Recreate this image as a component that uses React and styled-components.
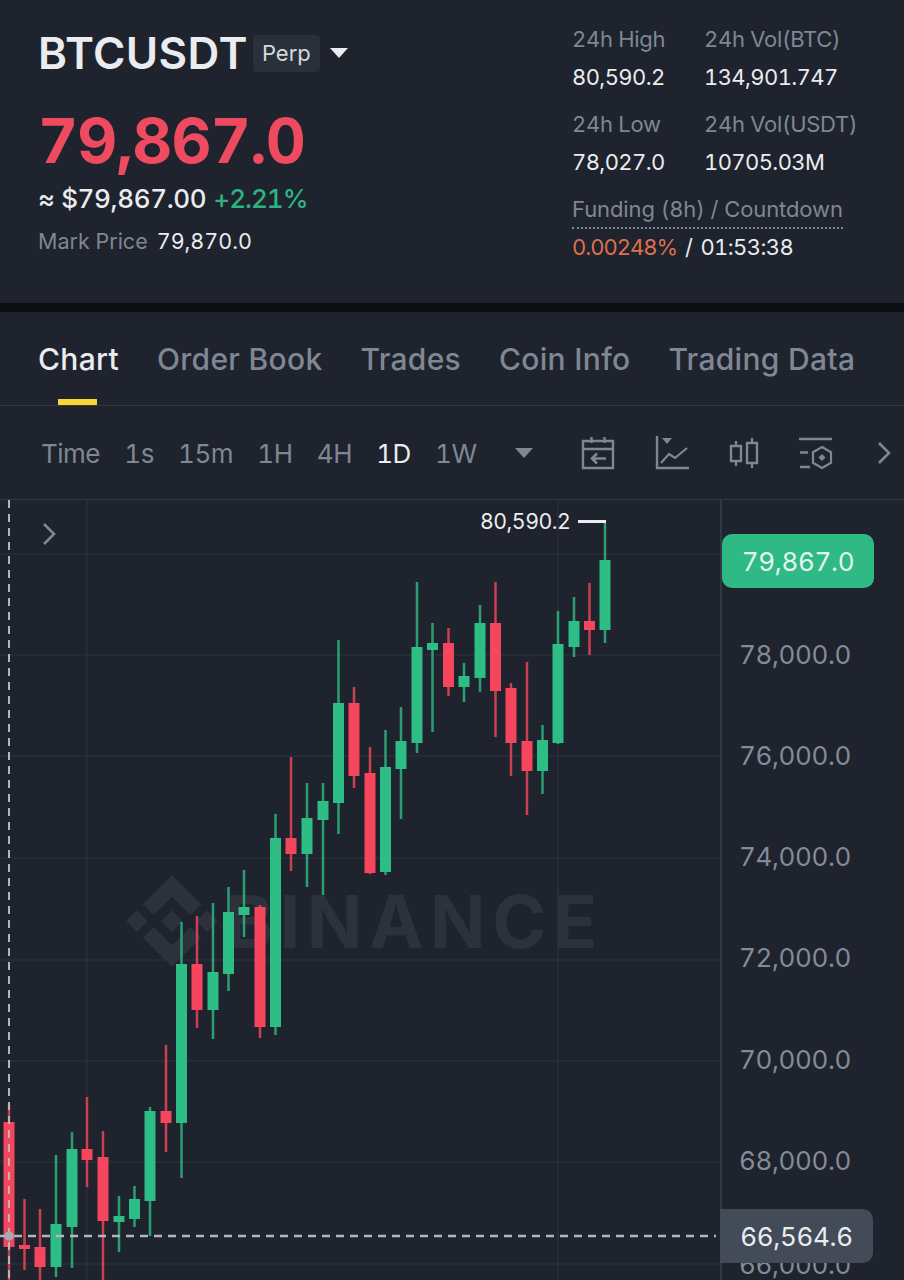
import styled, { createGlobalStyle } from 'styled-components';

const GlobalStyle = createGlobalStyle`
  html, body {
    margin: 0;
    padding: 0;
    background: #1e232d;
  }
  * {
    box-sizing: border-box;
  }
  body {
    font-family: Inter, 'Liberation Sans', sans-serif;
    font-variant-numeric: tabular-nums;
  }
`;

const GREEN = '#2ebd85';
const RED = '#f6465d';
const MUTED = '#7f8793';

// [x, top of body, bottom of body, wick top, wick bottom, colour]  y values are page px
const candles = [
  [9, 1122, 1247, 1105, 1280, 'r'],
  [24.5, 1245, 1249, 1199, 1270, 'r'],
  [40, 1247, 1267, 1209, 1280, 'r'],
  [56, 1224, 1267, 1155, 1277, 'g'],
  [72, 1149, 1227, 1132, 1268, 'g'],
  [87, 1149, 1160, 1097, 1187, 'r'],
  [103, 1157, 1221, 1131, 1280, 'r'],
  [119, 1216, 1222, 1196, 1252, 'g'],
  [134.5, 1199, 1219, 1186, 1227, 'g'],
  [150, 1111, 1201, 1107, 1236, 'g'],
  [166, 1111, 1123, 1045, 1152, 'r'],
  [181.5, 964, 1123, 922, 1178, 'g'],
  [197, 964, 1010, 916, 1028, 'r'],
  [213, 972, 1010, 903, 1039, 'g'],
  [228.5, 912, 974, 887, 991, 'g'],
  [244, 907, 915, 870, 937, 'g'],
  [260, 907, 1027, 905, 1038, 'r'],
  [275.5, 838, 1027, 814, 1035, 'g'],
  [291, 838, 854, 757, 871, 'r'],
  [307, 818, 854, 783, 887, 'g'],
  [323, 801, 820, 783, 895, 'g'],
  [338.5, 703, 803, 640, 834, 'g'],
  [354, 703, 776, 687, 788, 'r'],
  [370, 773, 873, 747, 874, 'r'],
  [385.5, 767, 872, 730, 875, 'g'],
  [401, 741, 769, 707, 819, 'g'],
  [417, 647, 743, 582, 753, 'g'],
  [432.5, 643, 650, 623, 732, 'g'],
  [448.5, 643, 687, 628, 696, 'r'],
  [464, 676, 687, 663, 702, 'g'],
  [480, 623, 678, 605, 692, 'g'],
  [495.5, 623, 691, 582, 737, 'r'],
  [511, 688, 743, 683, 776, 'r'],
  [527, 741, 771, 662, 815, 'r'],
  [542.5, 740, 771, 725, 794, 'g'],
  [558, 644, 743, 611, 744, 'g'],
  [574, 621, 647, 597, 657, 'g'],
  [589.5, 621, 630, 583, 655, 'r'],
  [605, 560, 630, 523, 643, 'g'],
];

const gridY = [554, 655, 756, 858, 960, 1061, 1162, 1264];
const gridX = [87, 558];
const axisLabels = [
  ['78,000.0', 155],
  ['76,000.0', 256],
  ['74,000.0', 357],
  ['72,000.0', 458],
  ['70,000.0', 560],
  ['68,000.0', 661],
  ['66,000.0', 765],
];

const Page = styled.div`
  width: 904px;
  height: 1280px;
  overflow: hidden;
  background: #1e232d;
  color: #eaecef;
`;

const Header = styled.header`
  height: 303px;
  padding: 24px 47px 0 38px;
  display: flex;
  justify-content: space-between;
`;

const Summary = styled.div`
  display: flex;
  flex-direction: column;
`;

const SymbolRow = styled.div`
  display: flex;
  align-items: center;
  height: 58px;
`;

const Symbol = styled.h1`
  margin: 0;
  font-size: 44px;
  font-weight: 600;
  letter-spacing: 0.4px;
  color: #eaecef;
`;

const Badge = styled.span`
  margin-left: 5px;
  width: 67px;
  height: 37px;
  border-radius: 4px;
  background: #2a303a;
  display: flex;
  align-items: center;
  justify-content: center;
  font-size: 22px;
  color: #d5d9df;
`;

const Caret = styled.span`
  width: 0;
  height: 0;
  margin-left: ${(p) => p.$gap}px;
  border-left: 9px solid transparent;
  border-right: 9px solid transparent;
  border-top: 10px solid ${(p) => p.$color};
`;

const LastPrice = styled.div`
  margin-top: 24px;
  font-size: 62px;
  line-height: 70px;
  font-weight: 700;
  letter-spacing: -0.85px;
  color: #ee4b60;
`;

const FiatRow = styled.div`
  margin-top: 6px;
  display: flex;
  gap: 7px;
  font-size: 26px;
  line-height: 34px;
  font-weight: 500;
  letter-spacing: -0.35px;
`;

const Change = styled.span`
  color: #2eb380;
  letter-spacing: -1px;
`;

const MarkRow = styled.div`
  margin-top: 10px;
  display: flex;
  gap: 9px;
  font-size: 21.5px;
  line-height: 30px;
`;

const Muted = styled.span`
  color: ${MUTED};
`;

const StatsColumn = styled.div`
  width: 285px;
  display: flex;
  flex-direction: column;
`;

const StatGrid = styled.div`
  display: grid;
  grid-template-columns: 132px 1fr;
  row-gap: 17px;
`;

const StatBlock = styled.div`
  display: flex;
  flex-direction: column;
  gap: 8px;
`;

const StatLabel = styled.span`
  font-size: 22px;
  line-height: 30px;
  letter-spacing: -0.3px;
  color: ${MUTED};
  white-space: nowrap;
`;

const StatValue = styled.span`
  font-size: 22px;
  line-height: 30px;
  letter-spacing: -0.6px;
  color: #eaecef;
  white-space: nowrap;
`;

const Funding = styled.div`
  margin-top: 17px;
  display: flex;
  flex-direction: column;
  align-items: flex-start;
`;

const FundingLabel = styled(StatLabel)`
  border-bottom: 2px dotted ${MUTED};
  padding-bottom: 3px;
  letter-spacing: -0.1px;
`;

const FundingValue = styled.div`
  margin-top: 3px;
  font-size: 22px;
  line-height: 30px;
  letter-spacing: -0.6px;
  display: flex;
  gap: 8px;
`;

const FundingRate = styled.span`
  color: #dd6f4e;
  letter-spacing: -1px;
`;

const Stripe = styled.div`
  height: 9px;
  background: #0b0e11;
`;

const Tabs = styled.nav`
  height: 94px;
  padding: 0 0 0 38px;
  display: flex;
  gap: 38px;
  border-bottom: 1px solid #333943;
`;

const Tab = styled.div`
  position: relative;
  height: 93px;
  display: flex;
  align-items: center;
  font-size: 30px;
  font-weight: 500;
  letter-spacing: 0.3px;
  white-space: nowrap;
  color: ${(p) => (p.$active ? '#eaecef' : MUTED)};

  ${(p) =>
    p.$active &&
    `
    &::after {
      content: '';
      position: absolute;
      left: 20px;
      bottom: 0;
      width: 39px;
      height: 6px;
      background: #fcd535;
    }
  `}
`;

const Toolbar = styled.div`
  height: 94px;
  padding: 1px 12px 0 41px;
  display: flex;
  align-items: center;
  border-bottom: 1px solid #333943;
`;

const Intervals = styled.div`
  display: flex;
  align-items: center;
  gap: 24.25px;
`;

const Interval = styled.span`
  font-size: 26px;
  letter-spacing: -0.5px;
  color: ${(p) => (p.$active ? '#eaecef' : MUTED)};
`;

const ToolIcons = styled.div`
  margin-left: 48px;
  display: flex;
  align-items: center;
  gap: 40px;
  color: ${MUTED};
`;

const ToolChevron = styled.div`
  margin-left: 4px;
  display: flex;
`;

const ChartArea = styled.section`
  position: relative;
  height: 780px;
  display: grid;
  grid-template-columns: 720px 184px;
  overflow: hidden;
`;

const Plot = styled.svg`
  display: block;
  width: 720px;
  height: 780px;
`;

const Axis = styled.div`
  position: relative;
  border-left: 2px solid #333943;
`;

const AxisLabel = styled.span`
  position: absolute;
  left: 17px;
  top: ${(p) => p.$y - 17}px;
  line-height: 34px;
  font-size: 26px;
  letter-spacing: -0.4px;
  color: #838b97;
`;

const PriceTag = styled.div`
  position: absolute;
  left: ${(p) => (p.$flush ? -2 : 0)}px;
  top: ${(p) => p.$y}px;
  width: ${(p) => (p.$flush ? 153 : 152)}px;
  height: 54px;
  display: flex;
  align-items: center;
  justify-content: center;
  font-size: 26px;
  letter-spacing: -0.3px;
  border-radius: ${(p) => (p.$flush ? '0 10px 10px 0' : '10px')};
  background: ${(p) => p.$bg};
  color: ${(p) => p.$color};
`;

const HighLabel = styled.div`
  position: absolute;
  left: 480px;
  top: 7px;
  display: flex;
  align-items: center;
  gap: 8px;
  font-size: 21.3px;
  line-height: 28px;
  letter-spacing: -0.5px;
  color: #eaecef;
`;

const HighDash = styled.span`
  width: 28px;
  height: 3px;
  background: #eaecef;
`;

const CollapseButton = styled.div`
  position: absolute;
  left: 42px;
  top: 22px;
  color: ${MUTED};
  display: flex;
`;

const Chevron = () => (
  <svg width="14" height="24" viewBox="0 0 14 24" fill="none" stroke="currentColor" strokeWidth="2.6">
    <path d="m2 2 10 10L2 22" />
  </svg>
);

const CalendarIcon = () => (
  <svg width="34" height="34" viewBox="0 0 34 34" fill="none" stroke="currentColor" strokeWidth="2.4">
    <path d="M2 5h30v27H2zM2 13h30M10.5 1v6M23.5 1v6" />
    <path d="M25 22.5H11M16 17.5l-5 5 5 5" strokeWidth="2.6" />
  </svg>
);

const IndicatorIcon = () => (
  <svg width="34" height="34" viewBox="0 0 34 34" fill="none" stroke="currentColor" strokeWidth="2.4">
    <path d="M2 0v32h32" />
    <path d="m6 27 8-9 6 4 12-10" strokeWidth="2.2" />
    <path d="M7 2h10l-5 6z" fill="currentColor" stroke="none" />
  </svg>
);

const CandleIcon = () => (
  <svg width="30" height="32" viewBox="0 0 30 32" fill="none" stroke="currentColor" strokeWidth="2.4">
    <path d="M2 9h10v15H2zM7 4v5M7 24v5M18 6h10v20H18zM23 1v5M23 26v5" />
  </svg>
);

const SettingsIcon = () => (
  <svg width="34" height="33" viewBox="0 0 34 33" fill="none" stroke="currentColor" strokeWidth="2.4">
    <path d="M0 2h33M1 15.5h8M1 30h10" />
    <path d="m23 10 9 5.2v10.6L23 31l-9-5.2V15.200z" strokeWidth="2.2" />
    <path d="m23 17 3.500 3.500L23 24l-3.500-3.500z" fill="currentColor" stroke="none" />
  </svg>
);

const Candle = ({ x, top, bottom, wickTop, wickBottom, color }) => (
  <g fill={color === 'g' ? GREEN : RED}>
    <rect x={x - 1.25} y={wickTop} width="2.5" height={wickBottom - wickTop} opacity="0.8" />
    <rect x={x - 5.5} y={top} width="11" height={Math.max(bottom - top, 3)} />
  </g>
);

const App = () => {
  return (
    <>
      <GlobalStyle />
      <Page>
        <Header>
          <Summary>
            <SymbolRow>
              <Symbol>BTCUSDT</Symbol>
              <Badge>Perp</Badge>
              <Caret $color="#eaecef" $gap={10} />
            </SymbolRow>
            <LastPrice>79,867.0</LastPrice>
            <FiatRow>
              <span>≈ $79,867.00</span>
              <Change>+2.21%</Change>
            </FiatRow>
            <MarkRow>
              <Muted>Mark Price</Muted>
              <span>79,870.0</span>
            </MarkRow>
          </Summary>
          <StatsColumn>
            <StatGrid>
              <StatBlock>
                <StatLabel>24h High</StatLabel>
                <StatValue>80,590.2</StatValue>
              </StatBlock>
              <StatBlock>
                <StatLabel>24h Vol(BTC)</StatLabel>
                <StatValue>134,901.747</StatValue>
              </StatBlock>
              <StatBlock>
                <StatLabel>24h Low</StatLabel>
                <StatValue>78,027.0</StatValue>
              </StatBlock>
              <StatBlock>
                <StatLabel>24h Vol(USDT)</StatLabel>
                <StatValue>10705.03M</StatValue>
              </StatBlock>
            </StatGrid>
            <Funding>
              <FundingLabel>Funding (8h) / Countdown</FundingLabel>
              <FundingValue>
                <FundingRate>0.00248%</FundingRate>
                <span>/</span>
                <span>01:53:38</span>
              </FundingValue>
            </Funding>
          </StatsColumn>
        </Header>
        <Stripe />
        <Tabs>
          <Tab $active>Chart</Tab>
          <Tab>Order Book</Tab>
          <Tab>Trades</Tab>
          <Tab>Coin Info</Tab>
          <Tab>Trading Data</Tab>
        </Tabs>
        <Toolbar>
          <Intervals>
            <Interval>Time</Interval>
            <Interval>1s</Interval>
            <Interval>15m</Interval>
            <Interval>1H</Interval>
            <Interval>4H</Interval>
            <Interval $active>1D</Interval>
            <Interval>1W</Interval>
            <Caret $color={MUTED} $gap={14} />
          </Intervals>
          <ToolIcons>
            <CalendarIcon />
            <IndicatorIcon />
            <CandleIcon />
            <SettingsIcon />
            <ToolChevron>
              <Chevron />
            </ToolChevron>
          </ToolIcons>
        </Toolbar>
        <ChartArea>
          <Plot viewBox="0 500 720 780">
            {gridY.map((y) => (
              <line key={y} x1="0" x2="720" y1={y} y2={y} stroke="#2a2f39" strokeWidth="1.5" />
            ))}
            {gridX.map((x) => (
              <line key={x} x1={x} x2={x} y1="500" y2="1280" stroke="#2a2f39" strokeWidth="1.5" />
            ))}
            <g transform="translate(120 869) scale(0.867)" fill="#2c313b">
              <path d="M38.73 53.2 60 31.93l21.28 21.28 12.37-12.38L60 7.18 26.35 40.83zM7.18 60l12.38-12.38L31.93 60 19.55 72.38zM38.73 66.8 60 88.07l21.28-21.28 12.38 12.37L60 112.82 26.35 79.17zM88.07 60l12.38-12.38L112.83 60l-12.38 12.38zM72.55 60 60 47.45 47.45 60 60 72.55z" />
            </g>
            <text x="225" y="948" fontFamily="Inter, sans-serif" fontSize="73" fontWeight="700" fill="#2c313b" textLength="372" lengthAdjust="spacing">
              BINANCE
            </text>
            {candles.map(([x, top, bottom, wickTop, wickBottom, color]) => (
              <Candle key={x} x={x} top={top} bottom={bottom} wickTop={wickTop} wickBottom={wickBottom} color={color} />
            ))}
            <line x1="9" x2="9" y1="500" y2="1280" stroke="#b2b6bd" strokeWidth="2" strokeDasharray="8 6" />
            <line x1="0" x2="716" y1="1236" y2="1236" stroke="#b2b6bd" strokeWidth="2.5" strokeDasharray="8 6" />
            <circle cx="9" cy="1236" r="4.5" fill="#a6abb3" />
          </Plot>
          <Axis>
            {axisLabels.map(([text, y]) => (
              <AxisLabel key={text} $y={y}>
                {text}
              </AxisLabel>
            ))}
            <PriceTag $y={34} $bg="#2fb984" $color="#e3f6ee">
              79,867.0
            </PriceTag>
            <PriceTag $flush $y={709} $bg="#434b59" $color="#eaecef">
              66,564.6
            </PriceTag>
          </Axis>
          <HighLabel>
            80,590.2
            <HighDash />
          </HighLabel>
          <CollapseButton>
            <Chevron />
          </CollapseButton>
        </ChartArea>
      </Page>
    </>
  );
};

export default App;
